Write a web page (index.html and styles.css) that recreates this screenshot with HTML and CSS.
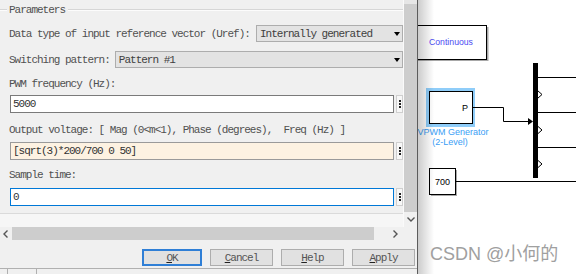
FILE: index.html
```html
<!DOCTYPE html>
<html>
<head>
<meta charset="utf-8">
<title>Block Parameters</title>
<link rel="stylesheet" href="styles.css">
</head>
<body>
<div class="screen">
  <div class="dialog">
    <div class="main">
      <div class="pane">
        <div class="group-title"><span>Parameters</span></div>
        <div class="row r1">
          <span class="lbl">Data type of input reference vector (Uref):</span>
          <div class="select s1"><span>Internally generated</span><i class="caret"></i></div>
        </div>
        <div class="row r2">
          <span class="lbl">Switching pattern:</span>
          <div class="select s2"><span>Pattern #1</span><i class="caret"></i></div>
        </div>
        <div class="lbl line l1">PWM frequency (Hz):</div>
        <div class="field f1"><div class="input">5000</div><div class="dots"><i></i><i></i><i></i></div></div>
        <div class="lbl line l2">Output voltage: [ Mag (0&lt;m&lt;1), Phase (degrees),&nbsp; Freq (Hz) ]</div>
        <div class="field f2"><div class="input warm">[sqrt(3)*200/700 0 50]</div><div class="dots"><i></i><i></i><i></i></div></div>
        <div class="lbl line l3">Sample time:</div>
        <div class="field f3"><div class="input focus">0</div><div class="dots"><i></i><i></i><i></i></div></div>
        <div class="pane-foot"></div>
      </div>
      <div class="vscroll">
        <div class="vtrack"></div>
        <div class="vthumb"></div>
        <div class="varrow"><svg width="8" height="5" viewBox="0 0 8 5"><polyline points="0.5,0.5 4,4 7.5,0.5" fill="none" stroke="#555" stroke-width="1.4"/></svg></div>
      </div>
    </div>
    <div class="hscroll">
      <div class="harrow"><svg width="5" height="8" viewBox="0 0 5 8"><polyline points="4.5,0.5 1,4 4.5,7.5" fill="none" stroke="#555" stroke-width="1.4"/></svg></div>
      <div class="hthumb"></div>
      <div class="htrack"><svg width="5" height="8" viewBox="0 0 5 8"><polyline points="0.5,0.5 4,4 0.5,7.5" fill="none" stroke="#555" stroke-width="1.4"/></svg></div>
      <div class="corner"></div>
    </div>
    <div class="buttons">
      <div class="btn default"><u>O</u>K</div>
      <div class="btn"><u>C</u>ancel</div>
      <div class="btn"><u>H</u>elp</div>
      <div class="btn"><u>A</u>pply</div>
    </div>
    <div class="status"><span class="seg a"></span><span class="seg b"></span></div>
  </div>
  <div class="canvas">
    <svg class="diagram" width="158" height="274" viewBox="0 0 158 274">
      <rect x="0" y="27" width="70.5" height="34" fill="#a8a8a8"/>
      <rect x="-2" y="25.5" width="70.5" height="34" fill="#fff" stroke="#000"/>
      <text x="33" y="45" class="t-cont">Continuous</text>

      <rect x="9.5" y="89.5" width="46" height="36" fill="none" stroke="#8fcdf9" stroke-width="3"/>
      <rect x="11.5" y="91.5" width="43" height="32" fill="#fff" stroke="#000"/>
      <text x="47" y="111" class="t-blk">P</text>
      <text x="32" y="135" class="t-lbl">SVPWM Generator</text>
      <text x="32" y="145" class="t-lbl">(2-Level)</text>

      <polyline points="55,107.5 85.5,107.5 85.5,121.5 111,121.5" fill="none" stroke="#000"/>
      <polygon points="110,118 115,121.5 110,125" fill="#000"/>

      <rect x="115" y="63" width="5" height="115" fill="#000"/>
      <line x1="120" y1="77.5" x2="158" y2="77.5" stroke="#000"/>
      <line x1="120" y1="112.5" x2="158" y2="112.5" stroke="#000"/>
      <line x1="120" y1="147.5" x2="158" y2="147.5" stroke="#000"/>
      <polyline points="119.5,90.5 124,94.5 119.5,98.5" fill="none" stroke="#000"/>
      <polyline points="119.5,126 124,130 119.5,134" fill="none" stroke="#000"/>
      <polyline points="119.5,160 124,164 119.5,168" fill="none" stroke="#000"/>

      <rect x="13" y="170" width="26" height="26" fill="#a8a8a8"/>
      <rect x="11.5" y="168.5" width="26" height="26" fill="#fff" stroke="#000"/>
      <text x="24.5" y="185" class="t-num">700</text>
      <line x1="38" y1="181.5" x2="158" y2="181.5" stroke="#000"/>
    </svg>
    <div class="shade"></div>
    <div class="watermark">CSDN @小何的</div>
  </div>
</div>
</body>
</html>
```
FILE: styles.css
```css
html, body {
  margin: 0;
  padding: 0;
}
body {
  width: 576px;
  height: 274px;
  overflow: hidden;
  background: #fff;
  font-family: "Liberation Mono", "DejaVu Sans Mono", monospace;
}
.screen {
  display: flex;
  height: 274px;
}
.dialog {
  flex: none;
  width: 417px;
  border-right: 1px solid #5c5c5c;
  background: #f0f0f0;
  display: flex;
  flex-direction: column;
}
.main {
  display: flex;
  height: 227px;
}
.pane {
  width: 404px;
  display: flex;
  flex-direction: column;
  border-right: 1px solid #fafafa;
  box-sizing: border-box;
}
.lbl, .group-title, .select, .input, .btn {
  font-size: 11px;
  letter-spacing: -1px;
}
.lbl {
  color: #505050;
  white-space: pre;
}
.group-title {
  height: 20px;
  display: flex;
  align-items: center;
  color: #505050;
}
.group-title::before,
.group-title::after {
  content: "";
  height: 0;
  border-top: 1px solid #d6d6d6;
  border-bottom: 1px solid #fcfcfc;
}
.group-title::before {
  width: 7px;
  margin-right: 2px;
}
.group-title::after {
  flex: 1;
  margin-left: 3px;
}
.row {
  display: flex;
  align-items: center;
  height: 17px;
  padding-left: 9px;
}
.r1 { margin-top: 5px; }
.r2 { margin-top: 9px; }
.select {
  box-sizing: border-box;
  height: 17px;
  border: 1px solid #adadad;
  background: #e3e3e3;
  color: #404040;
  display: flex;
  align-items: center;
  padding-left: 3px;
  padding-right: 2px;
}
.select span { flex: 1; }
.s1 { margin-left: auto; width: 147px; }
.s2 { margin-left: 5px; flex: 1; }
.caret {
  width: 0;
  height: 0;
  border-left: 3px solid transparent;
  border-right: 3px solid transparent;
  border-top: 4px solid #000;
}
.line {
  height: 14px;
  line-height: 14px;
  padding-left: 9px;
}
.l1 { margin-top: 9px; }
.l2 { margin-top: 10px; }
.l3 { margin-top: 8px; }
.field {
  display: flex;
  gap: 2px;
  margin-left: 10px;
}
.f1 { margin-top: 4px; }
.f2 { margin-top: 5px; }
.f3 { margin-top: 6px; }
.input {
  box-sizing: border-box;
  width: 384px;
  height: 18px;
  line-height: 16px;
  border: 1px solid #7a7a7a;
  background: #fff;
  padding-left: 2px;
  color: #333;
  white-space: pre;
}
.input.warm {
  background: #fdf2e2;
  border-color: #9a9a9a;
}
.input.focus {
  border-color: #0078d7;
}
.dots {
  box-sizing: border-box;
  width: 7px;
  height: 18px;
  border: 1px solid #cfcfcf;
  background: #f7f7f7;
  display: flex;
  flex-direction: column;
  align-items: center;
  justify-content: center;
  gap: 1px;
}
.dots i {
  display: block;
  width: 2px;
  height: 2px;
  background: #222;
}
.pane-foot {
  margin-top: auto;
  height: 13px;
  border-top: 1px solid #dadada;
  background: #f6f6f6;
}
.vscroll {
  width: 13px;
  display: flex;
  flex-direction: column;
}
.vtrack {
  height: 4px;
  background: #e6e6e6;
}
.vthumb {
  height: 208px;
  background: #cdcdcd;
}
.varrow {
  flex: 1;
  display: flex;
  align-items: center;
  justify-content: center;
}
.varrow svg, .harrow svg, .htrack svg { display: block; }
.hscroll {
  height: 13px;
  display: flex;
}
.harrow {
  width: 12px;
  display: flex;
  align-items: center;
  padding-left: 3px;
  box-sizing: border-box;
}
.hthumb {
  width: 362px;
  background: #cdcdcd;
}
.htrack {
  width: 30px;
  display: flex;
  align-items: center;
  justify-content: flex-end;
  padding-right: 6px;
  box-sizing: border-box;
}
.corner {
  flex: 1;
}
.buttons {
  height: 28px;
  box-sizing: border-box;
  padding: 9px 0 0 142px;
  display: flex;
  gap: 8px;
}
.btn {
  box-sizing: border-box;
  height: 17px;
  width: 63px;
  border: 1px solid #adadad;
  background: #e1e1e1;
  color: #555;
  display: flex;
  align-items: center;
  justify-content: center;
}
.btn.default {
  width: 60px;
  border: 2px solid #2f7fd6;
}
.btn u {
  text-decoration-color: #222;
}
.status {
  flex: 1;
  border-top: 1px solid #b0b0b0;
  display: flex;
}
.seg {
  border-right: 1px solid #b0b0b0;
}
.seg.a { width: 7px; }
.seg.b { width: 28px; }
.canvas {
  flex: 1;
  position: relative;
  background: #fff;
  overflow: hidden;
}
.diagram {
  display: block;
  font-family: "Liberation Sans", Arial, sans-serif;
}
.t-cont {
  font-size: 8.7px;
  fill: #4b4bf2;
  text-anchor: middle;
}
.t-blk {
  font-size: 9px;
  fill: #000;
  text-anchor: middle;
}
.t-lbl {
  font-size: 9px;
  fill: #3a9ef5;
  text-anchor: middle;
}
.t-num {
  font-size: 9px;
  fill: #000;
  text-anchor: middle;
}
.shade {
  position: absolute;
  left: 0;
  top: 0;
  bottom: 0;
  width: 16px;
  background: linear-gradient(to right, rgba(0,0,0,0.2), rgba(0,0,0,0));
}
.watermark {
  position: absolute;
  left: 12px;
  top: 243px;
  font-family: "Liberation Sans", "Noto Sans CJK SC", sans-serif;
  font-size: 18px;
  line-height: 22px;
  color: #a0a0a0;
  white-space: nowrap;
}
```
